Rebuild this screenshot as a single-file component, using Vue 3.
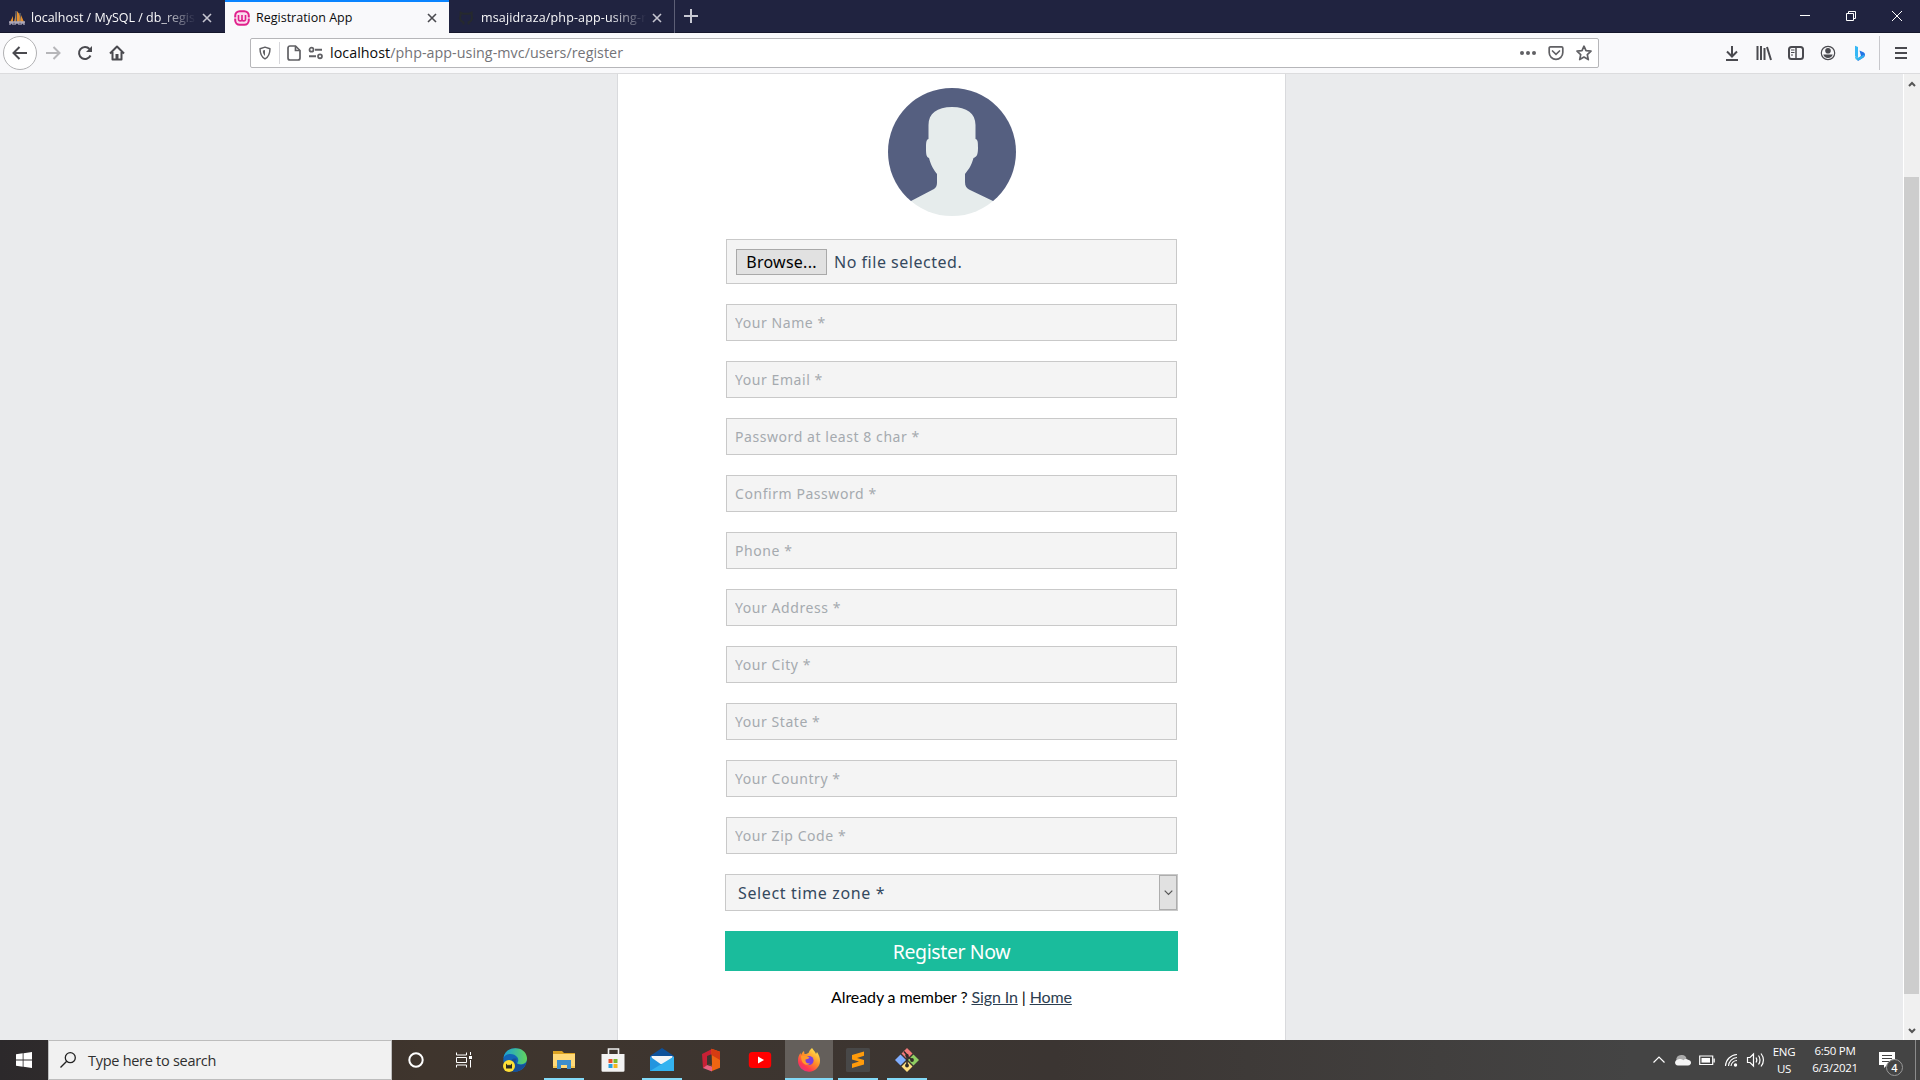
<script setup>
const fields = [
  'Your Name *', 'Your Email *', 'Password at least 8 char *', 'Confirm Password *', 'Phone *',
  'Your Address *', 'Your City *', 'Your State *', 'Your Country *', 'Your Zip Code *'
]
</script>

<template>
  <div class="screen">
    <header class="tabs">
      <div class="tab">
        <svg class="fav" viewBox="0 0 16 16"><path d="M1 12 4 6v6zM5 12 7 3v9zM8 12V1c3 3 4 7 4 11zM12 12V5l3 7z" fill="#e8912d" /><path d="M7 1v12M11 3v9" stroke="#8a8376" /><path d="M0 12h16M1 15v-2h3v2M6 15v-2h4v2M12 15v-2h3v2" stroke="#aaa6b8" stroke-width="1.3" fill="none" /></svg>
        <span class="title fade">localhost / MySQL / db_regis</span>
        <svg class="x" viewBox="0 0 10 10"><path d="m1 1 8 8M9 1 1 9" /></svg>
      </div>
      <div class="tab active">
        <svg class="fav" viewBox="0 0 16 16"><rect x="1.2" y="1.2" width="13.6" height="13.6" rx="4.5" fill="#fbdcee" stroke="#e0208c" stroke-width="2" /><path d="M4.5 5v4.2c0 2.2 3.5 2.2 3.5 0V5v4.2c0 2.2 3.5 2.2 3.5 0V5" fill="none" stroke="#e0208c" stroke-width="1.6" /><path d="M0 8h3M13 8h3" stroke="#f9f9fb" stroke-width="1.2" /></svg>
        <span class="title">Registration App</span>
        <svg class="x" viewBox="0 0 10 10"><path d="m1 1 8 8M9 1 1 9" /></svg>
      </div>
      <div class="tab third">
        <svg class="fav" viewBox="0 0 16 16"><path d="M5.5 14.5v-2.3C2 11 1.500 8 2.500 5.500L2.600 2.500l3 1.300h5l3-1.300v3c1 3 0 5.700-3 6.700v2.300" fill="none" stroke="#25292e" stroke-width="2" /></svg>
        <span class="title fade">msajidraza/php-app-using-m</span>
        <svg class="x" viewBox="0 0 10 10"><path d="m1 1 8 8M9 1 1 9" /></svg>
      </div>
      <svg class="plus" viewBox="0 0 14 14"><path d="M7 0v14M0 7h14" /></svg>
      <div class="window-controls">
        <svg viewBox="0 0 10 10"><path d="M0 4.500h10" /></svg>
        <svg viewBox="0 0 10 10"><path d="M.5 2.500h7v7h-7zM2.500 2.500v-2h7v7h-2" /></svg>
        <svg viewBox="0 0 10 10"><path d="m0 0 10 10M10 0 0 10" /></svg>
      </div>
    </header>

    <nav class="toolbar">
      <div class="history">
        <button class="back"><svg viewBox="0 0 16 16"><path d="M15 8H1.500M7.500 2 1.500 8l6 6" /></svg></button>
        <svg class="dim" viewBox="0 0 16 16"><path d="M1 8h13.500M8.500 2l6 6-6 6" /></svg>
        <svg viewBox="0 0 16 16"><path d="M13.500 10.500A6 6 0 1 1 12.500 4" /><path d="M15 1v6H9z" fill="#4a4a4f" stroke="none" /></svg>
        <svg viewBox="0 0 16 16"><path d="m1 8.500 7-7 7 7M3.500 7v7.500h9V7" stroke-linejoin="round" /><path d="M8 14V9" stroke-width="3" /></svg>
      </div>
      <div class="urlbar">
        <svg class="shield" viewBox="0 0 14 16"><path d="M7 1.200 12.800 3c0 6-1.600 9.600-5.800 11.800C2.800 12.600 1.200 9 1.200 3z" stroke-linejoin="round" /><path d="M7 4.500v7C5 10 4.500 8 4.500 5.200z" fill="#606064" stroke="none" /></svg>
        <i class="bar"></i>
        <svg class="doc" viewBox="0 0 14 16"><path d="M3 1h5.500L13 5.500V13a2 2 0 0 1-2 2H3a2 2 0 0 1-2-2V3a2 2 0 0 1 2-2z" /><path d="M8.500 1v4.500H13" /></svg>
        <svg class="perm" viewBox="0 0 16 14"><circle cx="3.500" cy="3.700" r="2" /><path d="M7 3.700h7M1 10.300h7" stroke-width="2" /><circle cx="12" cy="10.300" r="2" /></svg>
        <span class="url"><b>localhost</b>/php-app-using-mvc/users/register</span>
        <div class="url-actions">
          <svg viewBox="0 0 16 16" class="solid"><circle cx="2" cy="8" r="2" /><circle cx="8" cy="8" r="2" /><circle cx="14" cy="8" r="2" /></svg>
          <svg viewBox="0 0 16 16"><path d="M2.500 1.800h11a1.300 1.300 0 0 1 1.300 1.300V7.500a6.800 6.800 0 0 1-13.600 0V3.100a1.300 1.300 0 0 1 1.300-1.300z" /><path d="M4.500 6 8 9.300 11.500 6" stroke-linecap="round" /></svg>
          <svg viewBox="0 0 16 16"><path d="m8 1.200 2 4.500 5 .5-3.700 3.400 1 5L8 12.100l-4.300 2.500 1-5L1 6.200l5-.5z" stroke-linejoin="round" stroke-width="1.700" /></svg>
        </div>
      </div>
      <div class="tools">
        <svg viewBox="0 0 16 16"><path d="M8 1v10M3 6.500l5 5 5-5M2 15h12" /></svg>
        <svg viewBox="0 0 16 16"><path d="M1.500 1v14M5 1v14M8.500 3v12M11 2l4 13" /></svg>
        <svg viewBox="0 0 16 16"><rect x="1" y="2" width="14" height="12" rx="2.500" /><path d="M8 2v12" stroke-width="1.500" /><path d="M3 5h3.500M3 7.500h3.500M3 10h2" stroke-width="1" /></svg>
        <svg viewBox="0 0 16 16"><circle cx="8" cy="8" r="6.700" stroke-width="1.200" /><circle cx="8" cy="5.800" r="2.800" fill="#4a4a4f" stroke="none" /><path d="M3.300 9.500h9.400C12 11.800 10.500 13 8 13s-4-1.200-4.700-3.500z" fill="#4a4a4f" stroke="none" /></svg>
        <svg viewBox="0 0 16 16"><path d="M3 .8 6 2v11l-3-1.700z" fill="#36b8f5" stroke="none" /><path d="m7.500 5.500 4 1.800c2 1 2 4 .2 5.300L6 16l-3-4 3 1 3-2z" fill="#2474e5" stroke="none" /><path d="m3 11.300 3 1.700 6.500-3.500c0 3-5 6-7 5.800-1.800-.2-2.800-2-2.500-4z" fill="#35c9ef" stroke="none" opacity=".75" /></svg>
        <i class="bar tall"></i>
        <svg viewBox="0 0 16 16"><path d="M2 3h12M2 8h12M2 13h12" /></svg>
      </div>
    </nav>

    <main class="viewport">
      <section class="panel">
        <form class="form" @submit.prevent>
          <svg class="avatar" viewBox="0 0 128 128">
            <defs><clipPath id="avatar-clip"><circle cx="64" cy="64" r="64" /></clipPath></defs>
            <g clip-path="url(#avatar-clip)">
              <path fill="#555f80" d="M0 0h128v113H0z" />
              <path fill="#e6ecec" d="M64 19c15 0 23.500 6.500 23.500 18v14c2.500.5 2.500 4 2.500 9 0 6-1 9-4.500 10C83 79 80 82 77 86v8c0 4 1.500 6 4 7.500L105 113v15H23v-15l22-11.500c3-1.500 4-3.500 4-7.500v-8c-3-4-6-8-8-16-3-1-3-5-3-10s.2-8.500 2.500-9V37C40.500 25.500 49 19 64 19z" />
            </g>
          </svg>
          <div class="file"><button type="button">Browse...</button><span>No file selected.</span></div>
          <input v-for="field in fields" :key="field" class="field" type="text" :placeholder="field" />
          <div class="select"><span>Select time zone *</span><b><svg viewBox="0 0 9 6"><path d="m.7.700 3.800 3.800L8.300.700" /></svg></b></div>
          <button class="register">Register Now</button>
          <p class="links">Already a member ? <a>Sign In</a> | <a>Home</a></p>
        </form>
      </section>
      <div class="scrollbar">
        <svg viewBox="0 0 8 6"><path d="m1 5 3-3 3 3" /></svg>
        <i class="thumb"></i>
        <svg viewBox="0 0 8 6"><path d="m1 1 3 3 3-3" /></svg>
      </div>
    </main>

    <footer class="taskbar">
      <div class="start"><svg viewBox="0 0 16 16"><path fill="#fff" d="m0 2.200 6.700-.9v6.300H0zM7.500 1.200 16 0v7.600H7.500zM0 8.400h6.700v6.300L0 13.800zM7.500 8.400H16V16l-8.500-1.200z" /></svg></div>
      <div class="search"><svg viewBox="0 0 16 16"><circle cx="10.300" cy="5.700" r="5" /><path d="M6.700 9.300.5 15.500" /></svg><span>Type here to search</span></div>
      <div class="cell"><svg viewBox="0 0 24 24"><circle cx="12" cy="12" r="6.700" fill="none" stroke="#fff" stroke-width="2" /></svg></div>
      <div class="cell view"><svg viewBox="0 0 24 24" fill="none" stroke="#fff"><path d="M4.500 4.500v2.500h10V4.500M4.500 19.500v-2.500h10v2.500M4.500 9.500h10v5h-10zM18.500 4v3M18.500 12v7.500" /><path d="M17 8h3v3h-3z" fill="#fff" stroke="none" /></svg></div>
      <div class="cell">
        <svg viewBox="0 0 24 24"><defs><linearGradient id="edge-top"><stop stop-color="#189fd9" /><stop offset="1" stop-color="#62d45d" /></linearGradient></defs><circle cx="12" cy="12" r="11.700" fill="#1264b7" /><path d="M.5 10C2-3 23-3 24 10c.3 6-6 7.500-10 5.500 1-1.500 2-3.500.5-6C11 4.500 2.500 5 .5 10z" fill="url(#edge-top)" /><path d="M14 15.500c3 2.500 7 1.500 9-.5-2 6-7 9-12 8.500-4-2-6-7-3-11 1.500-2 4-2.500 6-1.500-2 1-2 3 0 4.500z" fill="#164e96" /><circle cx="6" cy="18" r="6" fill="#ffdf36" /><path d="M3 15.500v5h6v-5l-2 2-1-1-1 1z" fill="#292923" /></svg>
      </div>
      <div class="cell open">
        <svg viewBox="0 0 24 24"><path d="M1 3h9l2 2h11v15H1z" fill="#dca323" /><path d="M1 6h22v14H1z" fill="#ffd978" /><path d="M5 12h14v9h-4v-4H9v4H5z" fill="#3c8dcc" /><path d="M1 18h4v2H1zM19 18h4v2h-4z" fill="#f5c851" /></svg>
      </div>
      <div class="cell">
        <svg viewBox="0 0 24 24"><path d="M7.500 7V1h10v6" fill="none" stroke="#eee" stroke-width="1.600" /><path d="M.5 6h23v16.500a1.300 1.300 0 0 1-1.300 1.300H1.800a1.300 1.300 0 0 1-1.300-1.300z" fill="#f3f3f3" /><path d="M7.500 11h4v4h-4z" fill="#e8502a" /><path d="M12.500 11h4v4h-4z" fill="#7db82c" /><path d="M7.500 16h4v4h-4z" fill="#28a0df" /><path d="M12.500 16h4v4h-4z" fill="#f7b51c" /></svg>
      </div>
      <div class="cell open">
        <svg viewBox="0 0 24 24"><path d="M0 8 12 0l12 8v4H0z" fill="#0c519b" /><path d="M1.500 8h21v8h-21z" fill="#f2f5f8" /><path d="M0 8.500 12 17 24 8.500V23H0z" fill="#2395df" /><path d="M24 8.500V23L0 23z" fill="#34b3f0" /></svg>
      </div>
      <div class="cell">
        <svg viewBox="0 0 24 24"><path d="m3 6 10-5v5L8 8v9l-4 3.500z" fill="#c82035" /><path d="m4 20 4-3 5 1.500v5z" fill="#e86180" /><path d="m12.500.800 8.500 3v16L13 23v-5.500l-5-1 5 .5z" fill="#ee6512" /><path d="m12.500.800 8.500 3V12l-8.500-5z" fill="#d63b12" /></svg>
      </div>
      <div class="cell">
        <svg viewBox="0 0 24 24"><rect x=".8" y="4" width="22.400" height="16" rx="3.500" fill="#f00" /><path d="m10 8.500 6 3.500-6 3.500z" fill="#fff" /></svg>
      </div>
      <div class="cell current">
        <svg viewBox="0 0 24 24"><defs><linearGradient id="fox" x1=".9" y1="0" x2=".2" y2="1"><stop offset=".1" stop-color="#ffe04a" /><stop offset=".5" stop-color="#ff8a26" /><stop offset=".8" stop-color="#ff3850" /><stop offset="1" stop-color="#e0308c" /></linearGradient></defs><path d="M15 0c1 2 3 3 4 6l1-2c2 3 3 6 3 8.500A11 11 0 0 1 1 13c0-4 1-6 2.500-8L4 7c1-1 1-3 3-4l.5 3c2 0 3-.5 4-1 1-2 1.500-3.500 3.500-5z" fill="url(#fox)" /><circle cx="12" cy="12.500" r="4.600" fill="#7a3fdd" /><path d="M4 8c3-1 6 0 8.500 1.500-1 1.500-3 1.500-4 2C8 14 10 16 13 15.500c-3 3-9 1-9-7.500z" fill="#ff9a2a" /></svg>
      </div>
      <div class="cell open">
        <svg viewBox="0 0 24 24"><rect width="24" height="24" rx="1.500" fill="#484848" /><path d="m6 7 12-3.500v4.200l-7 2.300 7 2v4.500L6 20v-4.200l7-2.300-7-2z" fill="#ff9b0b" /></svg>
      </div>
      <div class="cell open">
        <svg viewBox="0 0 24 24"><path d="m12 0 5.500 5.500L12 11 6.500 5.500z" fill="#f07979" /><path d="m5.500 6.500 5.500 5.500-5.500 5.500L0 12z" fill="#80aeff" /><path d="m18.500 6.500L24 12l-5.500 5.500L13 12z" fill="#8fce62" /><path d="m12 13 5.500 5.500L12 24l-5.500-5.500z" fill="#ffe080" /><path d="M9 3.500 12 7v11M12 8l5 4" fill="none" stroke="#302b28" stroke-width="1.600" /><circle cx="12" cy="7.500" r="1.700" fill="#302b28" /><circle cx="12" cy="17.500" r="1.900" fill="#302b28" /><circle cx="17" cy="12" r="1.900" fill="#302b28" /></svg>
      </div>
      <div class="tray">
        <svg viewBox="0 0 16 16"><path d="m2.500 10.500 5.500-5.500 5.500 5.500" /></svg>
        <svg viewBox="0 0 16 16"><path d="M2 9a5 4 0 0 1 5-6c2.500 0 4 1.500 4.500 3.500L5 12z" fill="#aaa" stroke="none" /><path d="M3 13.500c-4-.5-4-5.500.5-6.300 2-.7 4 .2 5 1 1-1.200 3-1.500 4.500-.5 4 .5 4 5.500 0 5.800z" fill="#f5f5f5" stroke="none" /></svg>
        <svg viewBox="0 0 16 16"><path d="M.7 4h13v8.500H.7zM15.200 6.500v4" /><path d="M2.500 6h8.500v4.600H2.500z" fill="#fff" stroke="none" /></svg>
        <svg viewBox="0 0 16 16"><g stroke-width="1.100"><path d="M2.500 14A12 12 0 0 1 14 2.500M5.500 14A9 9 0 0 1 14 5.500M8 14a6 6 0 0 1 6-5.500" /></g><circle cx="12.500" cy="13" r="1.700" fill="#fff" stroke="none" /></svg>
        <svg viewBox="0 0 16 16"><path d="M.5 5.500h2.500L6.500 2v12L3 10.500H.500zM9 5.500c1 1.500 1 3.500 0 5M11.500 3.500c2 2.500 2 6.500 0 9M14 1.500c3 4 3 9 0 13" /></svg>
        <div class="lang"><span>ENG</span><span>US</span></div>
        <div class="clock"><span>6:50 PM</span><span>6/3/2021</span></div>
        <div class="notice">
          <svg viewBox="0 0 16 16"><path d="M0 0h16v13H8l-3 3v-3H0z" fill="#fff" stroke="none" /><path d="M3 3.500h10M3 6.500h10M3 9.500h7" stroke="#444" /></svg>
          <em>4</em>
        </div>
        <i class="peek"></i>
      </div>
    </footer>
  </div>
</template>

<style>
body { margin: 0; overflow: hidden; }
</style>

<style scoped>
* { box-sizing: border-box; }
svg { display: block; flex: none; overflow: visible; }
.screen { width: 1920px; height: 1080px; display: flex; flex-direction: column; font-family: "Open Sans", "Noto Sans", sans-serif; overflow: hidden; }
.tabs { height: 33px; flex: none; display: flex; align-items: center; background: #202340; border-bottom: 1px solid #15172c; }
.tab { width: 225px; height: 33px; display: flex; align-items: center; padding: 2px 13px 0 9px; color: #f9f9fa; font-size: 12.500px; align-self: flex-start; }
.tab.active { width: 224px; background: #f9f9fb; color: #0c0c0d; border-top: 2px solid #0a84ff; padding: 0 12px 0 9px; }
.tab.third { width: 226px; border-right: 1px solid #5d5f76; padding-right: 12px; }
.fav { width: 16px; height: 16px; margin-right: 6px; }
.third .fav { margin-right: 7px; }
.title { flex: 1; min-width: 0; white-space: nowrap; line-height: 20px; }
.fade { mask-image: linear-gradient(to right, #000 calc(100% - 36px), transparent); }
.third .fade { letter-spacing: .150px; }
.x { width: 10px; height: 10px; margin-left: 6px; fill: none; stroke: #c5c5d0; stroke-width: 1.600; }
.active .x { stroke: #4a4a4f; }
.plus { width: 14px; height: 14px; margin-left: 9px; fill: none; stroke: #c8c9d3; stroke-width: 2; }
.window-controls { margin-left: auto; display: flex; gap: 36px; padding-right: 18px; }
.window-controls svg { width: 10px; height: 10px; fill: none; stroke: #fff; stroke-width: 1; }

.toolbar { height: 41px; flex: none; display: flex; align-items: center; background: #f9f9fb; border-bottom: 1px solid #dcdcde; }
.toolbar svg { width: 16px; height: 16px; fill: none; stroke: #4a4a4f; stroke-width: 2; }
.history { width: 247px; flex: none; display: flex; align-items: center; gap: 16px; padding-left: 3px; }
.history .back { width: 34px; height: 34px; margin-right: -8px; border: 1px solid #b1b1b3; border-radius: 50%; background: #fff; padding: 0; display: flex; align-items: center; justify-content: center; }
.toolbar .dim { stroke: #b6b6b9; }
.urlbar { width: 1349px; height: 30px; flex: none; margin-left: 3px; display: flex; align-items: center; padding-left: 8px; background: #fff; border: 1px solid #b6b6b9; border-radius: 2px; }
.toolbar .urlbar svg { stroke: #606064; stroke-width: 1.700; }
.toolbar .solid { fill: #606064; stroke: none !important; }
.toolbar .shield { width: 12px; height: 14px; }
.bar { width: 1px; height: 22px; background: #d7d7db; margin: 0 7px 0 8px; }
.toolbar .doc { width: 14px; height: 16px; }
.toolbar .perm { width: 16px; height: 14px; margin: 0 6px 0 7px; }
.url { color: #737378; font-size: 14.300px; letter-spacing: .040px; line-height: 20px; }
.url b { color: #0c0c0d; font-weight: 400; }
.url-actions { margin-left: auto; display: flex; gap: 12px; padding-right: 6px; }
.tools { margin-left: auto; display: flex; align-items: center; gap: 16px; padding-right: 11px; }
.bar.tall { height: 34px; background: #c8c8cc; margin: 0 -3px 0 -5px; }

.viewport { height: 966px; flex: none; display: flex; background: #eaebed; }
.panel { width: 669px; margin-left: 617px; background: #fff; border: solid #d9dadd; border-width: 0 1px; padding-left: 107px; }
.form { width: 453px; display: flex; flex-direction: column; align-items: center; font-family: "Noto Sans", "Open Sans", sans-serif; padding-top: 14px; }
.avatar { width: 128px; height: 128px; flex: none; }
.file { width: 451px; height: 45px; flex: none; margin: 23px 0 20px; display: flex; align-items: center; padding: 0 9px; background: #f4f4f4; border: 1px solid #c9c9c9; color: #34495e; font-size: 16px; letter-spacing: .520px; }
.file button { width: 91px; height: 26px; margin-right: 7px; padding: 0; border: 1px solid #a9a9a9; background: #e1e1e1; color: #000; font: inherit; letter-spacing: .250px; line-height: 22px; }
.field { width: 451px; height: 37px; flex: none; margin: 0 0 20px; padding: 0 8px; border: 1px solid #c9c9c9; border-radius: 0; background: #f4f4f4; font: 14px "Noto Sans", "Open Sans", sans-serif; letter-spacing: .560px; }
.field::placeholder { color: #a5aaaf; opacity: 1; }
.select { width: 453px; height: 37px; flex: none; padding-left: 12px; display: flex; align-items: center; justify-content: space-between; border: 1px solid #c9c9c9; background: #f4f4f4; color: #34495e; font-size: 16px; letter-spacing: .640px; }
.select b { width: 18px; height: 35px; display: flex; align-items: center; justify-content: center; background: #e1e1e1; border: 1px solid #adadad; }
.select svg { width: 9px; height: 6px; fill: none; stroke: #555; stroke-width: 1.200; }
.register { width: 453px; height: 40px; flex: none; margin-top: 20px; padding: 0; border: 0; background: #1abc9c; color: #fff; font-family: inherit; font-size: 19.500px; letter-spacing: -.400px; }
.links { margin: 14px 0 0; color: #000; font: 16px/24px Lato, sans-serif; letter-spacing: -.110px; white-space: nowrap; }
.links a { color: #2c3e50; text-decoration: underline; }
.scrollbar { width: 17px; margin-left: auto; padding: 7px 1px 6px 0; display: flex; flex-direction: column; align-items: center; background: #f0f0f0; border-left: 1px solid #fff; }
.scrollbar svg { width: 8px; height: 6px; fill: none; stroke: #555; stroke-width: 2; }
.thumb { width: 15px; height: 817px; margin: 90px 0 auto; background: #cdcdcd; }

.taskbar { height: 40px; flex: none; display: flex; background: linear-gradient(to right, #2c292b, #3f352d 22%, #3b3532 55%, #444 85%); }
.start { width: 48px; display: flex; align-items: center; justify-content: center; }
.start svg { width: 16px; height: 16px; }
.search { width: 344px; display: flex; align-items: center; padding-left: 11px; background: #f1f1f1; border: 1px solid #bdbdbd; color: #2f2f2f; font-size: 14.500px; letter-spacing: -.280px; }
.search svg { width: 16px; height: 16px; margin-right: 12px; fill: none; stroke: #222; stroke-width: 1.300; }
.cell { width: 48px; margin-right: 1px; display: flex; align-items: center; justify-content: center; border-bottom: 2px solid transparent; padding-top: 2px; }
.cell svg { width: 24px; height: 24px; }
.search + .cell { margin-right: 0; }
.cell.view { margin-right: 3px; }
.cell.open { background: linear-gradient(#83daf8, #83daf8) bottom / 40px 2px no-repeat; background-origin: border-box; background-clip: border-box; }
.cell.current { background: #645f5b; border-color: #83daf8; }
.tray { margin-left: auto; display: flex; align-items: center; color: #fff; font-size: 11.500px; padding-right: 4px; }
.tray svg { width: 16px; height: 16px; margin-right: 8px; fill: none; stroke: #fff; stroke-width: 1.200; }
.lang, .clock { display: flex; flex-direction: column; text-align: center; line-height: 17px; letter-spacing: -.300px; }
.lang { width: 28px; margin: 0 0 0 -1px; }
.clock { width: 50px; margin: -2px 19px 0 12px; font-size: 11.500px; }
.notice { width: 16px; height: 16px; position: relative; }
.notice em { position: absolute; left: 7px; top: 7px; width: 17px; height: 17px; border: 1px solid #999; border-radius: 50%; background: #444; font-style: normal; font-weight: 600; font-size: 11px; line-height: 15px; text-align: center; }
.peek { width: 1px; height: 40px; margin-left: 20px; background: #8b8b8b; }
</style>
